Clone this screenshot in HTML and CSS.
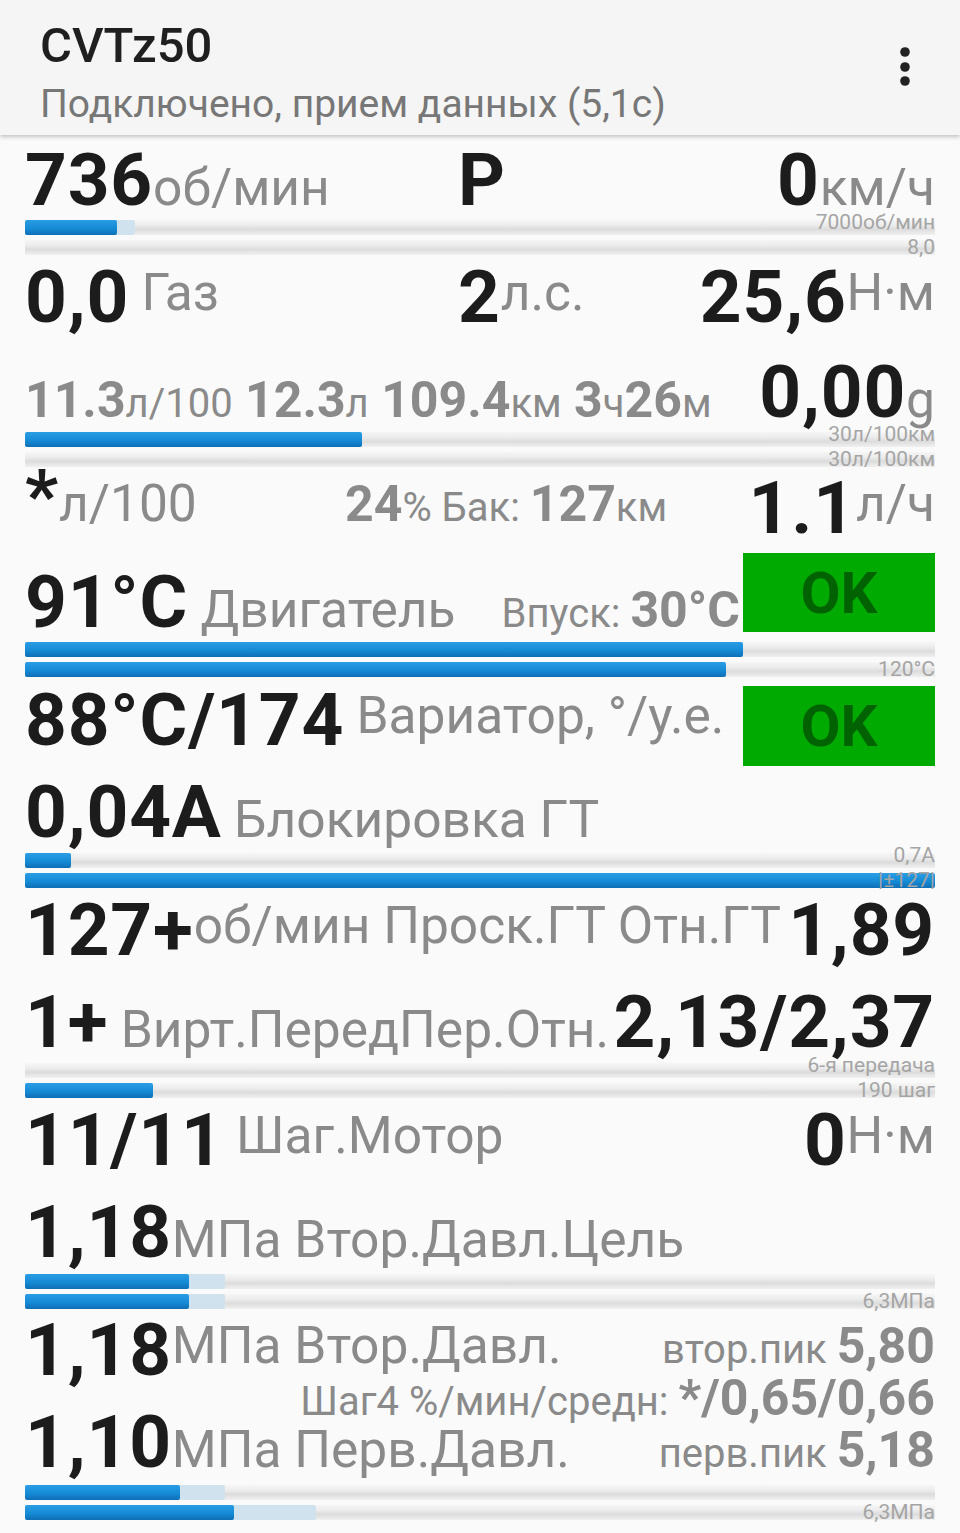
FILE: index.html
```html
<!DOCTYPE html>
<html lang="ru">
<head>
<meta charset="UTF-8">
<meta name="viewport" content="width=device-width, initial-scale=1.0">
<title>CVTz50</title>
<link rel="stylesheet" href="styles.css">
</head>
<body>

<!-- Top Bar with Title and Menu -->
<div class="top-bar">
  <div class="top-text">
    <div class="title">CVTz50</div>
    <div class="subtitle">Подключено, прием данных (5,1с)</div>
  </div>
  <svg class="menu" width="20" height="44" viewBox="0 0 20 44">
    <circle cx="10" cy="7" r="4.8"/>
    <circle cx="10" cy="22" r="4.8"/>
    <circle cx="10" cy="36" r="4.8"/>
  </svg>
</div>

<div class="panel">

  <!-- Engine speed / selector / vehicle speed -->
  <div class="row cols-mid">
    <div><span class="big">736</span><span class="unit">об/мин</span></div>
    <div><span class="big">P</span></div>
    <div class="end"><span class="big">0</span><span class="unit">км/ч</span></div>
  </div>
  <div class="meter">
    <div class="bars">
      <div class="track"><div class="sec" style="width:12.1%"></div><div class="fill" style="width:10.1%"></div></div>
      <div class="track"></div>
    </div>
    <div class="marks"><span>7000об/мин</span><span>8,0</span></div>
  </div>

  <!-- Throttle / power / torque -->
  <div class="row cols-mid h95">
    <div><span class="big">0,0</span> <span class="unit up">Газ</span></div>
    <div><span class="big">2</span><span class="unit up">л.с.</span></div>
    <div class="end"><span class="big">25,6</span><span class="unit up">Н·м</span></div>
  </div>

  <!-- Trip -->
  <div class="row">
    <div><span class="mid">11.3</span><span class="sm">л/100</span> <span class="mid">12.3</span><span class="sm">л</span> <span class="mid">109.4</span><span class="sm">км</span> <span class="mid">3</span><span class="sm">ч</span><span class="mid">26</span><span class="sm">м</span></div>
    <div><span class="big">0,00</span><span class="unit">g</span></div>
  </div>
  <div class="meter">
    <div class="bars">
      <div class="track"><div class="fill" style="width:37%"></div></div>
      <div class="track"></div>
    </div>
    <div class="marks"><span>30л/100км</span><span>30л/100км</span></div>
  </div>

  <!-- Consumption / tank -->
  <div class="row cols-tank h94">
    <div><span class="up"><span class="big star">*</span><span class="unit">л/100</span></span></div>
    <div><span class="up"><span class="mid">24</span><span class="sm">% Бак: </span><span class="mid">127</span><span class="sm">км</span></span></div>
    <div class="end"><span class="big">1.1</span><span class="unit up">л/ч</span></div>
  </div>

  <!-- Engine temperature -->
  <div class="row">
    <div><span class="big">91°C</span> <span class="unit">Двигатель</span></div>
    <div class="inlet"><span class="sm">Впуск: </span><span class="mid">30°C</span></div>
    <div class="ok ok-low">OK</div>
  </div>
  <div class="meter">
    <div class="bars">
      <div class="track"><div class="fill" style="width:78.9%"></div></div>
      <div class="track"><div class="fill" style="width:77%"></div></div>
    </div>
    <div class="marks"><span>120°C</span></div>
  </div>

  <!-- CVT temperature -->
  <div class="row tall gap-top">
    <div><span class="big">88°C/174</span> <span class="unit up">Вариатор, °/у.е.</span></div>
    <div class="ok ok-high">OK</div>
  </div>

  <!-- Lock-up -->
  <div class="row h67">
    <div><span class="big">0,04A</span> <span class="unit">Блокировка ГТ</span></div>
  </div>
  <div class="meter">
    <div class="bars">
      <div class="track"><div class="fill" style="width:5.1%"></div></div>
      <div class="track"><div class="fill" style="width:100%"></div></div>
    </div>
    <div class="marks"><span>0,7A</span><span>|±127|</span></div>
  </div>

  <!-- Slip / ratio -->
  <div class="row tall nudge">
    <div><span class="big">127+</span><span class="unit up">об/мин Проск.ГТ Отн.ГТ</span></div>
    <div><span class="big">1,89</span></div>
  </div>
  <div class="row h67">
    <div><span class="big">1+</span> <span class="unit">Вирт.ПередПер.Отн.</span></div>
    <div><span class="big">2,13/2,37</span></div>
  </div>
  <div class="meter">
    <div class="bars">
      <div class="track"></div>
      <div class="track"><div class="fill" style="width:14.1%"></div></div>
    </div>
    <div class="marks"><span>6-я передача</span><span>190 шаг</span></div>
  </div>

  <!-- Step motor -->
  <div class="row tall nudge">
    <div><span class="big">11/11</span> <span class="unit up">Шаг.Мотор</span></div>
    <div><span class="big">0</span><span class="unit up">Н·м</span></div>
  </div>
  <div class="row h68">
    <div><span class="big">1,18</span><span class="unit">МПа Втор.Давл.Цель</span></div>
  </div>
  <div class="meter">
    <div class="bars">
      <div class="track"><div class="sec" style="width:22%"></div><div class="fill" style="width:18%"></div></div>
      <div class="track"><div class="sec" style="width:22%"></div><div class="fill" style="width:18%"></div></div>
    </div>
    <div class="marks"><span>6,3МПа</span></div>
  </div>

  <!-- Pressures -->
  <div class="row h59">
    <div><span class="big">1,18</span><span class="unit up">МПа Втор.Давл.</span></div>
    <div><span class="up"><span class="sm">втор.пик </span><span class="mid">5,80</span></span></div>
  </div>
  <div class="row h33 right">
    <div><span class="sm">Шаг4 %/мин/средн: </span><span class="mid">*/0,65/0,66</span></div>
  </div>
  <div class="row h69">
    <div><span class="big">1,10</span><span class="unit">МПа Перв.Давл.</span></div>
    <div><span class="sm">перв.пик </span><span class="mid">5,18</span></div>
  </div>
  <div class="meter">
    <div class="bars">
      <div class="track"><div class="sec" style="width:22%"></div><div class="fill" style="width:17%"></div></div>
      <div class="track"><div class="sec" style="width:32%"></div><div class="fill" style="width:23%"></div></div>
    </div>
    <div class="marks"><span>6,3МПа</span></div>
  </div>

</div>

</body>
</html>
```

FILE: styles.css
```css
body {
margin: 0;
background-color: #fafafa;
font-family: Roboto, "Noto Sans", sans-serif;
color: #1c1c1c;
}


/* Top bar */
.top-bar {
display: flex;
justify-content: space-between;
height: 135px;
box-sizing: border-box;
padding: 21px 45px 0 40px;
background-color: #f5f5f5;
box-shadow: 0 2px 4px rgba(0, 0, 0, 0.22);
position: relative;
}

.title {
font-size: 49px;
line-height: 49px;
font-weight: 500;
color: #1f1f1f;
}

.subtitle {
margin-top: 15px;
font-size: 39px;
line-height: 39px;
color: #777;
}

.menu {
margin-top: 24px;
fill: #222;
}


/* Data panel */
.panel {
padding: 9px 25px 0 25px;
}

.row {
display: flex;
justify-content: space-between;
align-items: baseline;
height: 66px;
font-size: 50px;
line-height: 50px;
white-space: nowrap;
}

.row.cols-mid {
display: grid;
grid-template-columns: 433px auto 1fr;
}

.row.cols-tank {
display: grid;
grid-template-columns: 320px auto 1fr;
}

.row .end {
justify-self: end;
}

.row.right {
justify-content: flex-end;
}

.row.tall { height: 92px; }
.row.h95 { height: 95px; margin-top: 1px; }
.row.h94 { height: 94px; }
.row.h67 { height: 67px; }
.row.h68 { height: 68px; }
.row.h59 { height: 59px; }
.row.h33 { height: 33px; }
.row.h69 { height: 69px; }
.row.gap-top { margin-top: 2px; }
.row.nudge { margin-top: 1px; }

.big {
font-size: 73px;
line-height: 72px;
font-weight: 700;
letter-spacing: 0.8px;
color: #1c1c1c;
}

.big.star {
line-height: 40px;
}

.unit {
font-size: 51.5px;
color: #8a8a8a;
}

.mid {
font-size: 50px;
font-weight: 700;
color: #8a8a8a;
}

.sm {
font-size: 40px;
color: #8a8a8a;
}

.up {
vertical-align: 12px;
}

.inlet {
margin-left: auto;
margin-right: 3px;
}


/* Status box */
.ok {
display: flex;
justify-content: center;
align-items: center;
width: 192px;
background-color: #00aa00;
color: #006200;
font-size: 58px;
line-height: 58px;
font-weight: 700;
}

.ok-low {
height: 79px;
align-self: flex-end;
}

.ok-high {
height: 80px;
align-self: flex-start;
margin-top: 2px;
}


/* Bars */
.meter {
display: grid;
height: 50px;
}

.bars, .marks {
grid-area: 1 / 1;
}

.bars {
display: flex;
flex-direction: column;
gap: 5px;
padding-top: 10px;
}

.track {
display: grid;
height: 15px;
background: linear-gradient(to bottom, #f6f6f6 0%, #ececec 35%, #dcdcdc 62%, #f0f0f0 100%);
}

.track > div {
grid-area: 1 / 1;
border-radius: 2px;
}

.sec {
background-color: #d0e2ed;
}

.fill {
background: linear-gradient(to bottom, #2a9de4 0%, #168bd6 55%, #0e6fb5 100%);
}

.marks {
display: flex;
flex-direction: column;
justify-content: flex-end;
align-items: flex-end;
font-size: 21px;
line-height: 25px;
color: #a5a5a5;
}
```
